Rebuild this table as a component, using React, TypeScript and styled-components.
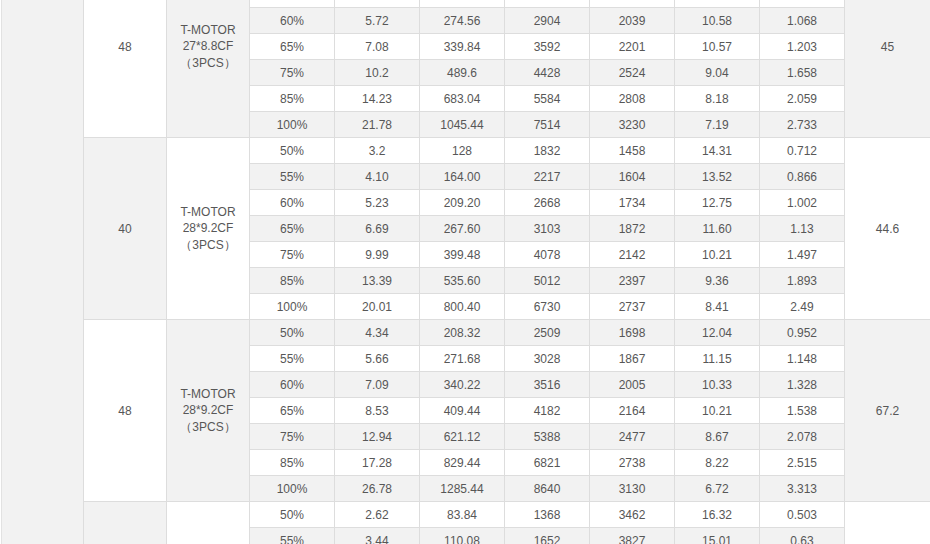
import React from 'react';
import styled, { createGlobalStyle } from 'styled-components';

const Global = createGlobalStyle`
  html, body { margin: 0; padding: 0; background: #fff; overflow: hidden; }
  body { font-family: "Liberation Sans", Arial, "Noto Sans CJK SC", sans-serif; }
`;

const Viewport = styled.div`
  width: 930px;
  height: 544px;
  overflow: hidden;
`;

const Sheet = styled.div`
  display: grid;
  grid-template-columns: 83px 83px 83px repeat(7, 85px) 86px;
  grid-auto-rows: 26px;
  width: 932px;
  padding-left: 1px;
  margin-top: -44px;
  font-size: 12px;
  color: #575757;
`;

const Cell = styled.div<{ $shade: boolean; $span?: number; $edge?: boolean }>`
  box-sizing: border-box;
  display: flex;
  align-items: center;
  justify-content: center;
  text-align: center;
  border-right: 1px solid #dddddd;
  border-bottom: 1px solid #dddddd;
  ${(p) => (p.$edge ? 'border-left: 1px solid #e2e2e2;' : '')}
  background: ${(p) => (p.$shade ? '#f2f2f2' : '#ffffff')};
  ${(p) => (p.$span ? `grid-row: span ${p.$span};` : '')}
`;

const MotorName = styled.div`
  line-height: 16.5px;
`;

const Paren = styled.span`
  display: inline-block;
  width: 12px;
  text-align: center;
  font-family: "Liberation Sans", Arial, sans-serif;
`;

type Row = string[];
type Group = { volt: string; brand: string; model: string; qty: string; temp: string; rows: Row[] };

const blank: Row = ['', '', '', '', '', '', ''];

const groups: Group[] = [
  {
    volt: '48',
    brand: 'T-MOTOR',
    model: '27*8.8CF',
    qty: '3PCS',
    temp: '45',
    rows: [
      blank,
      blank,
      ['60%', '5.72', '274.56', '2904', '2039', '10.58', '1.068'],
      ['65%', '7.08', '339.84', '3592', '2201', '10.57', '1.203'],
      ['75%', '10.2', '489.6', '4428', '2524', '9.04', '1.658'],
      ['85%', '14.23', '683.04', '5584', '2808', '8.18', '2.059'],
      ['100%', '21.78', '1045.44', '7514', '3230', '7.19', '2.733'],
    ],
  },
  {
    volt: '40',
    brand: 'T-MOTOR',
    model: '28*9.2CF',
    qty: '3PCS',
    temp: '44.6',
    rows: [
      ['50%', '3.2', '128', '1832', '1458', '14.31', '0.712'],
      ['55%', '4.10', '164.00', '2217', '1604', '13.52', '0.866'],
      ['60%', '5.23', '209.20', '2668', '1734', '12.75', '1.002'],
      ['65%', '6.69', '267.60', '3103', '1872', '11.60', '1.13'],
      ['75%', '9.99', '399.48', '4078', '2142', '10.21', '1.497'],
      ['85%', '13.39', '535.60', '5012', '2397', '9.36', '1.893'],
      ['100%', '20.01', '800.40', '6730', '2737', '8.41', '2.49'],
    ],
  },
  {
    volt: '48',
    brand: 'T-MOTOR',
    model: '28*9.2CF',
    qty: '3PCS',
    temp: '67.2',
    rows: [
      ['50%', '4.34', '208.32', '2509', '1698', '12.04', '0.952'],
      ['55%', '5.66', '271.68', '3028', '1867', '11.15', '1.148'],
      ['60%', '7.09', '340.22', '3516', '2005', '10.33', '1.328'],
      ['65%', '8.53', '409.44', '4182', '2164', '10.21', '1.538'],
      ['75%', '12.94', '621.12', '5388', '2477', '8.67', '2.078'],
      ['85%', '17.28', '829.44', '6821', '2738', '8.22', '2.515'],
      ['100%', '26.78', '1285.44', '8640', '3130', '6.72', '3.313'],
    ],
  },
  {
    volt: '',
    brand: '',
    model: '',
    qty: '',
    temp: '',
    rows: [
      ['50%', '2.62', '83.84', '1368', '3462', '16.32', '0.503'],
      ['55%', '3.44', '110.08', '1652', '3827', '15.01', '0.63'],
    ],
  },
];

const totalRows = groups.reduce((n, g) => n + g.rows.length, 0);

export default function App() {
  let index = 0;
  const cells: React.ReactNode[] = [
    <Cell key="model" $shade $edge $span={totalRows} />,
  ];
  groups.forEach((g, gi) => {
    const firstShade = index % 2 === 0;
    g.rows.forEach((r, ri) => {
      const shade = index % 2 === 0;
      if (ri === 0) {
        cells.push(
          <Cell key={`v${gi}`} $shade={!firstShade} $span={g.rows.length}>
            {g.volt}
          </Cell>,
          <Cell key={`p${gi}`} $shade={firstShade} $span={g.rows.length}>
            {g.brand && (
              <MotorName>
                <div>{g.brand}</div>
                <div>{g.model}</div>
                <div>
                  <Paren>（</Paren>
                  {g.qty}
                  <Paren>）</Paren>
                </div>
              </MotorName>
            )}
          </Cell>
        );
      }
      r.forEach((v, ci) => {
        cells.push(
          <Cell key={`r${gi}-${ri}-${ci}`} $shade={shade}>
            {v}
          </Cell>
        );
      });
      if (ri === 0) {
        cells.push(
          <Cell key={`t${gi}`} $shade={firstShade} $span={g.rows.length}>
            {g.temp}
          </Cell>
        );
      }
      index += 1;
    });
  });
  return (
    <Viewport>
      <Global />
      <Sheet>{cells}</Sheet>
    </Viewport>
  );
}
